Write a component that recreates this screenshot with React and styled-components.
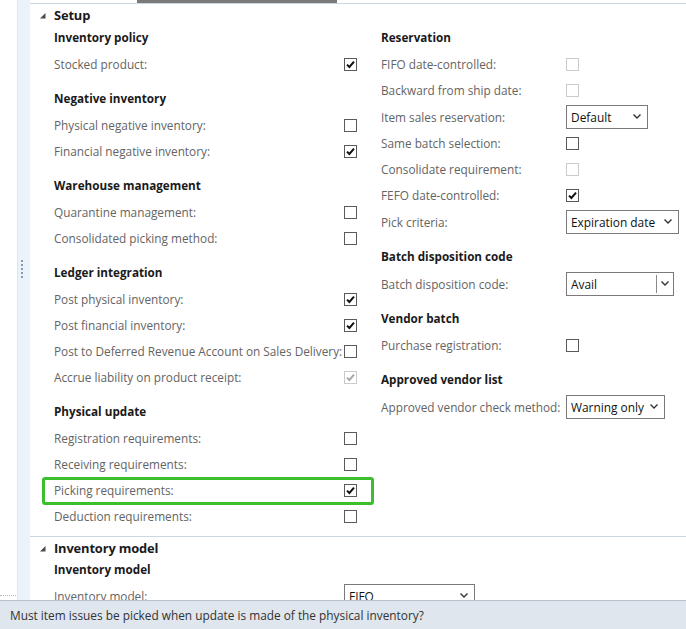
import React from "react";
import styled, { createGlobalStyle } from "styled-components";

const GlobalStyle = createGlobalStyle`
  html, body { margin: 0; padding: 0; background: #ffffff; }
  body { overflow: hidden; font-family: "Open Sans", "Noto Sans", "Liberation Sans", sans-serif; }
`;

const FONT = `"Open Sans", "Noto Sans", "Liberation Sans", sans-serif`;

const Page = styled.div`
  width: 686px;
  height: 629px;
  display: flex;
  flex-direction: column;
  overflow: hidden;
  font-family: ${FONT};
`;

const Main = styled.div`
  height: 600px;
  display: flex;
  overflow: hidden;
`;

const Gutter = styled.div`
  width: 17px;
  display: flex;
  flex-direction: column;
  justify-content: flex-end;
  padding-bottom: 3px;
  box-sizing: border-box;
`;

const GutterMark = styled.div`
  height: 1px;
  width: 16px;
  border-top: 1px dotted #b8b8b8;
`;

const Band = styled.div`
  width: 13px;
  background: #eaf2fb;
  border-left: 1px solid #dce7f3;
  box-sizing: border-box;
  display: flex;
  flex-direction: column;
  align-items: center;
  padding-top: 260px;
  gap: 2px;
`;

const Dot = styled.div`
  width: 2px;
  height: 2px;
  background: #8d9bab;
  margin-left: -4px;
`;

const Panel = styled.div`
  flex: 1;
  display: flex;
  flex-direction: column;
  min-width: 0;
`;

const TopStrip = styled.div`
  height: 3px;
  display: flex;
  padding-left: 107px;
`;

const TopThumb = styled.div`
  width: 200px;
  height: 3px;
  background: #7a7a7a;
`;

const Section = styled.section`
  border-top: 1px solid #cdd6e1;
  padding-bottom: ${(p) => p.$pb || 0}px;
`;

const SectionHeader = styled.div`
  height: ${(p) => p.$h || 21}px;
  display: flex;
  align-items: center;
  padding-left: 10px;
  font-size: 12.9px;
  font-weight: 700;
  letter-spacing: -0.15px;
  color: #1a1a1a;
`;

const Caret = styled.svg`
  width: 14px;
  height: 6px;
  flex: none;
  margin-top: 2px;
`;

const Columns = styled.div`
  display: flex;
  padding-left: 24px;
`;

const Column = styled.div`
  width: ${(p) => p.$w}px;
  flex: none;
  display: flex;
  flex-direction: column;
  gap: 9px;
`;

const Group = styled.div`
  display: flex;
  flex-direction: column;
`;

const Heading = styled.div`
  height: ${(p) => p.$h || 26}px;
  display: flex;
  align-items: center;
  padding-bottom: 2px;
  box-sizing: border-box;
  font-size: 11.7px;
  font-weight: 700;
  color: #1a1a1a;
`;

const Row = styled.div`
  position: relative;
  height: ${(p) => (p.$tall ? 27 : 26)}px;
  display: grid;
  grid-template-columns: ${(p) => p.$label}px auto;
  align-items: center;
`;

const Label = styled.span`
  font-size: 11.8px;
  color: #646464;
  white-space: nowrap;
`;

const Highlight = styled.div`
  position: absolute;
  left: -12px;
  top: 0;
  width: 332px;
  height: 28px;
  box-sizing: border-box;
  border: 3px solid #3cbf2c;
  border-radius: 3px;
  pointer-events: none;
`;

const Box = styled.span`
  width: 13px;
  height: 13px;
  box-sizing: border-box;
  border: 1px solid ${(p) => (p.$disabled ? "#cbcbcb" : "#5a5a5a")};
  background: #fff;
  display: flex;
  align-items: center;
  justify-content: center;
`;

const Select = styled.div`
  width: ${(p) => p.$w}px;
  height: 24px;
  box-sizing: border-box;
  border: 1px solid #7a7a7a;
  background: #fff;
  display: flex;
  align-items: center;
  padding-left: 4px;
  font-size: 11.9px;
  color: #111;
`;

const SelectText = styled.span`
  flex: 1;
  white-space: nowrap;
`;

const LookupSep = styled.span`
  width: 1px;
  align-self: stretch;
  margin: 2px 0;
  background: #8a8a8a;
`;

const ChevronWrap = styled.span`
  width: ${(p) => (p.$split ? 16 : 20)}px;
  display: flex;
  justify-content: center;
  align-items: center;
`;

const StatusBar = styled.div`
  height: 29px;
  box-sizing: border-box;
  border-top: 1px solid #b9c1ca;
  background: #dfe6ee;
  display: flex;
  align-items: center;
  padding-left: 10px;
  font-size: 11.85px;
  color: #333;
`;

const Check = ({ color }) => (
  <svg width="11" height="11" viewBox="0 0 11 11">
    <path d="M2 5.6 L4.4 8 L9 2.6" fill="none" stroke={color} strokeWidth="2" />
  </svg>
);

const Checkbox = ({ state }) => {
  const disabled = state === "disabled" || state === "disabledOn";
  return (
    <Box $disabled={disabled}>
      {state === "on" && <Check color="#111" />}
      {state === "disabledOn" && <Check color="#a9a9a9" />}
    </Box>
  );
};

const Chevron = () => (
  <svg width="8" height="5" viewBox="0 0 8 5">
    <path d="M0.5 0.5 L4 4 L7.5 0.5" fill="none" stroke="#333" strokeWidth="1.4" />
  </svg>
);

const Dropdown = ({ value, width, split }) => (
  <Select $w={width}>
    <SelectText>{value}</SelectText>
    {split && <LookupSep />}
    <ChevronWrap $split={split}>
      <Chevron />
    </ChevronWrap>
  </Select>
);

const CaretIcon = () => (
  <Caret viewBox="0 0 14 6">
    <path d="M5.5 0 L5.5 5.5 L0 5.5 Z" fill="#4a4a4a" />
  </Caret>
);

const leftGroups = [
  { heading: "Inventory policy", rows: [{ label: "Stocked product:", cb: "on" }] },
  {
    heading: "Negative inventory",
    rows: [
      { label: "Physical negative inventory:", cb: "off" },
      { label: "Financial negative inventory:", cb: "on" },
    ],
  },
  {
    heading: "Warehouse management",
    rows: [
      { label: "Quarantine management:", cb: "off" },
      { label: "Consolidated picking method:", cb: "off" },
    ],
  },
  {
    heading: "Ledger integration",
    rows: [
      { label: "Post physical inventory:", cb: "on" },
      { label: "Post financial inventory:", cb: "on" },
      { label: "Post to Deferred Revenue Account on Sales Delivery:", cb: "off" },
      { label: "Accrue liability on product receipt:", cb: "disabledOn" },
    ],
  },
  {
    heading: "Physical update",
    rows: [
      { label: "Registration requirements:", cb: "off" },
      { label: "Receiving requirements:", cb: "off" },
      { label: "Picking requirements:", cb: "on", highlight: true },
      { label: "Deduction requirements:", cb: "off" },
    ],
  },
];

const rightGroups = [
  {
    heading: "Reservation",
    rows: [
      { label: "FIFO date-controlled:", cb: "disabled" },
      { label: "Backward from ship date:", cb: "disabled" },
      { label: "Item sales reservation:", select: { value: "Default", width: 82 } },
      { label: "Same batch selection:", cb: "off" },
      { label: "Consolidate requirement:", cb: "disabled" },
      { label: "FEFO date-controlled:", cb: "on" },
      { label: "Pick criteria:", select: { value: "Expiration date", width: 113 } },
    ],
  },
  {
    heading: "Batch disposition code",
    rows: [{ label: "Batch disposition code:", select: { value: "Avail", width: 108, split: true } }],
  },
  { heading: "Vendor batch", rows: [{ label: "Purchase registration:", cb: "off" }] },
  {
    heading: "Approved vendor list",
    rows: [{ label: "Approved vendor check method:", select: { value: "Warning only", width: 99 } }],
  },
];

const FieldRow = ({ row, labelWidth }) => (
  <Row $label={labelWidth} $tall={!!row.select}>
    <Label>{row.label}</Label>
    {row.select ? (
      <Dropdown value={row.select.value} width={row.select.width} split={row.select.split} />
    ) : (
      <Checkbox state={row.cb} />
    )}
    {row.highlight && <Highlight />}
  </Row>
);

const FieldColumn = ({ groups, width, labelWidth }) => (
  <Column $w={width}>
    {groups.map((g) => (
      <Group key={g.heading}>
        <Heading>{g.heading}</Heading>
        {g.rows.map((r) => (
          <FieldRow key={r.label} row={r} labelWidth={labelWidth} />
        ))}
      </Group>
    ))}
  </Column>
);

export default function App() {
  return (
    <>
      <GlobalStyle />
      <Page>
        <Main>
          <Gutter>
            <GutterMark />
          </Gutter>
          <Band>
            {[0, 1, 2, 3, 4].map((i) => (
              <Dot key={i} />
            ))}
          </Band>
          <Panel>
            <TopStrip>
              <TopThumb />
            </TopStrip>
            <Section $pb={7}>
              <SectionHeader>
                <CaretIcon />
                Setup
              </SectionHeader>
              <Columns>
                <FieldColumn groups={leftGroups} width={327} labelWidth={290} />
                <FieldColumn groups={rightGroups} width={300} labelWidth={185} />
              </Columns>
            </Section>
            <Section>
              <SectionHeader $h={21}>
                <CaretIcon />
                Inventory model
              </SectionHeader>
              <Columns>
                <Column $w={600}>
                  <Group>
                    <Heading $h={24}>Inventory model</Heading>
                    <Row $label={290} $tall>
                      <Label>Inventory model:</Label>
                      <Dropdown value="FIFO" width={131} />
                    </Row>
                  </Group>
                </Column>
              </Columns>
            </Section>
          </Panel>
        </Main>
        <StatusBar>Must item issues be picked when update is made of the physical inventory?</StatusBar>
      </Page>
    </>
  );
}
